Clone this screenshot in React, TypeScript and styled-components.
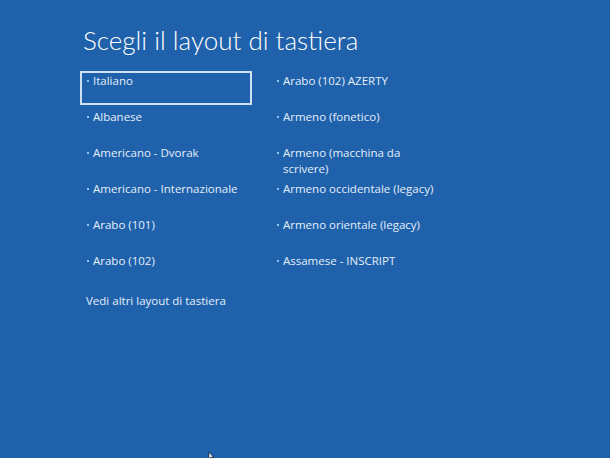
import React from "react";
import styled, { createGlobalStyle } from "styled-components";

const Global = createGlobalStyle`
  html, body { margin: 0; padding: 0; background: #1f62ab; }
  body { width: 610px; height: 458px; overflow: hidden; }
`;

const Screen = styled.div`
  width: 610px;
  height: 458px;
  background: #1f62ab;
  color: #e8f0f8;
  font-family: "Open Sans", "Noto Sans", sans-serif;
  padding: 23px 0 0 80px;
  box-sizing: border-box;
  position: relative;
`;

const Title = styled.h1`
  margin: 0 0 14px 3px;
  font-family: "Lato", "Open Sans", sans-serif;
  font-size: 26px;
  font-weight: 300;
  line-height: 34px;
  color: #ffffff;
`;

const Grid = styled.div`
  display: grid;
  grid-template-columns: 172px 172px;
  column-gap: 18px;
  row-gap: 2px;
  grid-auto-flow: column;
  grid-template-rows: repeat(6, 34px);
`;

const Item = styled.div<{ $focused?: boolean }>`
  box-sizing: border-box;
  border: 2px solid ${(p) => (p.$focused ? "#cfe0f2" : "transparent")};
  padding: 0 6px 0 5px;
  display: flex;
  align-items: flex-start;
  gap: 4px;
  font-size: 11.5px;
  line-height: 16px;
  color: #e4eef9;
`;

const Bullet = styled.span`
  flex: none;
  width: 2px;
  height: 2px;
  background: #8cc4ef;
  margin-top: 7px;
`;

const Label = styled.span`
  flex: 1;
`;

const More = styled.div`
  margin: 8px 0 0 6px;
  font-size: 11.5px;
  line-height: 16px;
  color: #e4eef9;
`;

const Cursor = styled.svg`
  position: absolute;
  left: 208px;
  top: 452px;
`;

const col1 = ["Italiano", "Albanese", "Americano - Dvorak", "Americano - Internazionale", "Arabo (101)", "Arabo (102)"];
const col2 = [
  "Arabo (102) AZERTY",
  "Armeno (fonetico)",
  "Armeno (macchina da scrivere)",
  "Armeno occidentale (legacy)",
  "Armeno orientale (legacy)",
  "Assamese - INSCRIPT",
];

export default function App() {
  return (
    <>
      <Global />
      <Screen>
        <Title>Scegli il layout di tastiera</Title>
        <Grid>
          {[...col1, ...col2].map((t, i) => (
            <Item key={t} $focused={i === 0}>
              <Bullet />
              <Label>{t}</Label>
            </Item>
          ))}
        </Grid>
        <More>Vedi altri layout di tastiera</More>
        <Cursor width="8" height="8" viewBox="0 0 8 8">
          <path d="M1 0 L1 7 L3 5 L6 6 Z" fill="#ffffff" stroke="#000" strokeWidth="0.6" />
        </Cursor>
      </Screen>
    </>
  );
}
